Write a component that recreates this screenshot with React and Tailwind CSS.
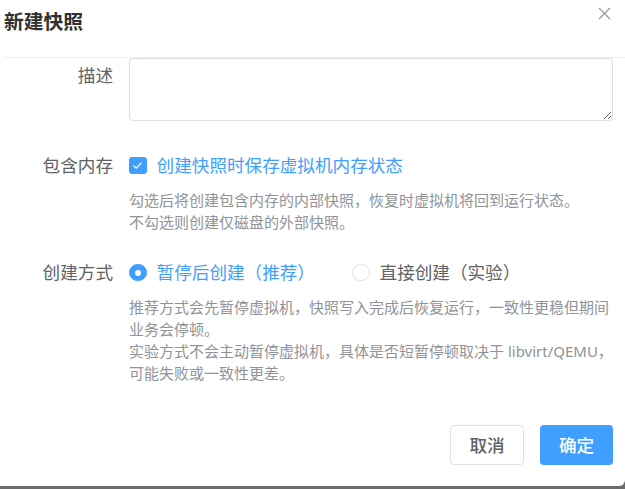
import { useState } from "react";

const FONT = "font-['Noto_Sans','Noto_Sans_CJK_SC',sans-serif]";

function CheckBox({ checked }) {
  return (
    <span
      className={`flex h-[17.6px] w-[17.6px] items-center justify-center rounded-[3px] border ${
        checked ? "border-[#409eff] bg-[#409eff]" : "border-[#dcdfe6] bg-white"
      }`}
    >
      {checked && (
        <svg width="11" height="9" viewBox="0 0 11 9" fill="none">
          <path d="M1.5 4.6 L4.2 7.2 L9.6 1.6" stroke="#fff" strokeWidth="1.3" />
        </svg>
      )}
    </span>
  );
}

function Radio({ checked, label, onClick, className = "" }) {
  return (
    <button
      type="button"
      onClick={onClick}
      className={`flex items-center gap-[10px] ${className}`}
    >
      <span
        className={`flex h-[17.6px] w-[17.6px] items-center justify-center rounded-full border ${
          checked ? "border-[#409eff] bg-[#409eff]" : "border-[#dcdfe6] bg-white"
        }`}
      >
        {checked && <span className="h-[6px] w-[6px] rounded-full bg-white" />}
      </span>
      <span
        className={`text-[17.6px] leading-[35px] ${checked ? "text-[#409eff]" : "text-[#606266]"}`}
      >
        {label}
      </span>
    </button>
  );
}

function FormRow({ label, children, className = "" }) {
  return (
    <div className={`flex ${className}`}>
      <div className="w-[129px] shrink-0 pr-[16px] text-right text-[17.6px] leading-[35px] text-[#606266]">
        {label}
      </div>
      <div className="w-[484px]">{children}</div>
    </div>
  );
}

export default function App() {
  const [withMem, setWithMem] = useState(true);
  const [mode, setMode] = useState("pause");

  return (
    <div className={`h-[489px] w-[625px] overflow-hidden bg-[#6b6b6b] ${FONT}`}>
      <div className="relative h-[486px] w-[625px] rounded-br-[6px] bg-white">
        {/* header */}
        <div className="h-[57px] pl-[4px] pt-[8px]">
          <h2 className="text-[19.8px] font-bold leading-[28px] text-[#303133]">
            新建快照
          </h2>
        </div>
        <button type="button" className="absolute right-[14px] top-[7px] text-[#909399]">
          <svg width="13" height="13" viewBox="0 0 13 13" fill="none">
            <path d="M1 1 L12 12 M12 1 L1 12" stroke="currentColor" strokeWidth="1.1" />
          </svg>
        </button>
        <div className="ml-[3px] border-t border-[#ebeef5]" />

        {/* body */}
        <FormRow label="描述">
          <textarea
            rows={2}
            className="block h-[63px] w-[484px] rounded-[4px] border border-[#dcdfe6] px-[12px] py-[6px] text-[15px] text-[#606266] outline-none"
          />
        </FormRow>

        <FormRow label="包含内存" className="mt-[27px]">
          <button
            type="button"
            onClick={() => setWithMem(!withMem)}
            className="flex items-center gap-[10px]"
          >
            <CheckBox checked={withMem} />
            <span
              className={`text-[17.6px] leading-[35px] ${withMem ? "text-[#409eff]" : "text-[#606266]"}`}
            >
              创建快照时保存虚拟机内存状态
            </span>
          </button>
          <p className="mt-[6px] text-[15px] leading-[22px] text-[#909399]">
            勾选后将创建包含内存的内部快照，恢复时虚拟机将回到运行状态。
            <br />
            不勾选则创建仅磁盘的外部快照。
          </p>
        </FormRow>

        <FormRow label="创建方式" className="mt-[22px]">
          <div className="flex items-center">
            <Radio
              checked={mode === "pause"}
              label="暂停后创建（推荐）"
              onClick={() => setMode("pause")}
            />
            <Radio
              checked={mode === "direct"}
              label="直接创建（实验）"
              onClick={() => setMode("direct")}
              className="ml-[37px]"
            />
          </div>
          <p className="mt-[6px] text-[15px] leading-[22px] text-[#909399]">
            推荐方式会先暂停虚拟机，快照写入完成后恢复运行，一致性更稳但期间业务会停顿。
            <br />
            实验方式不会主动暂停虚拟机，具体是否短暂停顿取决于 libvirt/QEMU，可能失败或一致性更差。
          </p>
        </FormRow>

        {/* footer */}
        <div className="mt-[41px] flex justify-end gap-[16px] pr-[12px]">
          <button
            type="button"
            className="h-[40px] w-[74px] rounded-[4px] border border-[#dcdfe6] bg-white text-[17.6px] font-medium text-[#606266]"
          >
            取消
          </button>
          <button
            type="button"
            className="h-[40px] w-[73px] rounded-[4px] bg-[#409eff] text-[17.6px] font-medium text-white"
          >
            确定
          </button>
        </div>
      </div>
    </div>
  );
}
